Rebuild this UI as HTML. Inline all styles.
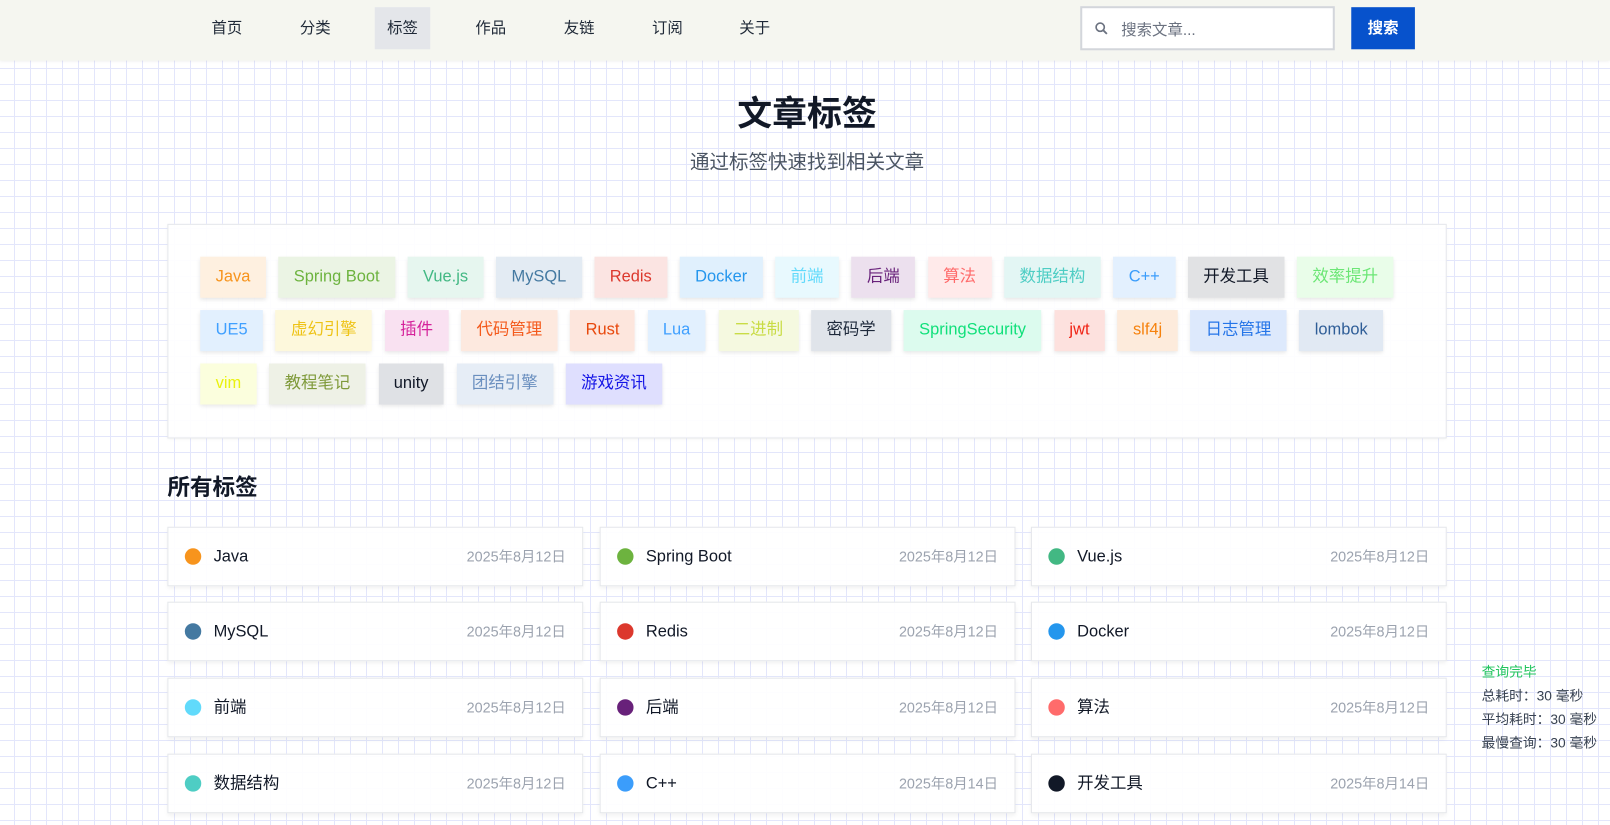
<!DOCTYPE html>
<html><head><meta charset="utf-8"><style>
*{box-sizing:border-box;margin:0;padding:0}
html{width:1610px;height:824px;overflow:hidden;background-color:#fff;background-image:linear-gradient(#e3e6fb 1px,transparent 1px),linear-gradient(90deg,#e3e6fb 1px,transparent 1px);background-size:16px 16px;background-position:14px 4px}
body{width:1568px;height:803px;overflow:visible;font-family:"Liberation Sans","Noto Sans CJK SC",sans-serif;color:#111827;position:relative;transform:scale(1.02679);transform-origin:0 0}
.nav{position:absolute;top:0;left:0;width:1568px;height:59px;background:#f5f6f0;box-shadow:0 1px 3px rgba(0,0,0,.08)}
.nav a{position:absolute;top:7px;height:41px;line-height:41px;padding:0 12px;font-size:15px;color:#1f2937;text-decoration:none}
.nav a.on{background:#e4e6ea}
.search{position:absolute;left:1052px;top:6px;width:248px;height:43px;border:2px solid #d3d6db;background:#fff}
.search span{position:absolute;left:38px;top:10px;font-size:15px;color:#6b7280}
.btn{position:absolute;left:1316px;top:7px;width:62px;height:41px;background:#0752cc;color:#fff;font-size:15px;font-weight:bold;text-align:center;line-height:41px}
h1{position:absolute;top:83px;left:0;width:1572px;text-align:center;font-size:34px;font-weight:bold;color:#111827}
.sub{position:absolute;top:143px;left:0;width:1572px;text-align:center;font-size:19px;color:#4b5563}
.cloud{position:absolute;left:163px;top:218px;width:1246px;height:209px;background:rgba(255,255,255,.9);border:1px solid #e5e7eb;box-shadow:0 1px 3px rgba(0,0,0,.05);padding:31px 31px}
.tags{display:flex;flex-wrap:wrap;gap:12px 12.3px}
.t{height:40px;line-height:40px;padding:0 15px;font-size:16px;box-shadow:0 2px 4px rgba(0,0,0,.1)}
h2{position:absolute;left:163px;top:457px;font-size:22px;font-weight:bold}
.card{position:absolute;width:405px;height:58px;background:rgba(255,255,255,.92);border:1px solid #e5e7eb;box-shadow:0 2px 4px rgba(0,0,0,.06);display:flex;align-items:center;padding:0 16px}
.card i{width:16px;height:16px;border-radius:50%;flex:none;margin-right:12px}
.card b{font-size:16px;font-weight:normal;color:#111827;line-height:20px;flex:1;padding-top:2px}
.card em{font-size:14px;font-style:normal;color:#9ca3af;line-height:20px}
.stats{position:absolute;left:1443px;top:643px;font-size:13.4px;line-height:23px;color:#374151}
</style></head><body>
<div class="nav">
<a style="left:194px">首页</a><a style="left:280px">分类</a><a class="on" style="left:365px">标签</a><a style="left:451px">作品</a><a style="left:537px">友链</a><a style="left:623px">订阅</a><a style="left:708px">关于</a>
<div class="search"><svg style="position:absolute;left:12px;top:13px" width="14" height="14" viewBox="0 0 14 14"><circle cx="5.5" cy="5.5" r="4" fill="none" stroke="#6b7280" stroke-width="1.6"/><path d="M8.5 8.5L12 12" stroke="#6b7280" stroke-width="1.8"/></svg><span>搜索文章...</span></div>
<div class="btn">搜索</div>
</div>
<h1>文章标签</h1>
<div class="sub">通过标签快速找到相关文章</div>
<div class="cloud"><div class="tags">
<span class="t" style="background:#fef0e0;color:#f7941d">Java</span>
<span class="t" style="background:#ebf4e4;color:#6db33f">Spring Boot</span>
<span class="t" style="background:#e6f6ef;color:#42b883">Vue.js</span>
<span class="t" style="background:#e3ebf3;color:#4479a1">MySQL</span>
<span class="t" style="background:#fbe4e2;color:#dc382d">Redis</span>
<span class="t" style="background:#e0f0fd;color:#2496ed">Docker</span>
<span class="t" style="background:#e8f9fe;color:#61dafb">前端</span>
<span class="t" style="background:#ece0ee;color:#68217a">后端</span>
<span class="t" style="background:#ffeaea;color:#ff6b6b">算法</span>
<span class="t" style="background:#e3f6f4;color:#4ecdc4">数据结构</span>
<span class="t" style="background:#e3f0fe;color:#3b9dfb">C++</span>
<span class="t" style="background:#e1e2e4;color:#111827">开发工具</span>
<span class="t" style="background:#e9fde9;color:#6be675">效率提升</span>
<span class="t" style="background:#e2f0fe;color:#40a0ff">UE5</span>
<span class="t" style="background:#fdf8dc;color:#eec316">虚幻引擎</span>
<span class="t" style="background:#f9e1f1;color:#d5239b">插件</span>
<span class="t" style="background:#fde9df;color:#f45a1c">代码管理</span>
<span class="t" style="background:#fde6dd;color:#e8480c">Rust</span>
<span class="t" style="background:#e2f0fe;color:#40a0ff">Lua</span>
<span class="t" style="background:#f5f9e0;color:#c9dc46">二进制</span>
<span class="t" style="background:#e0e4ea;color:#1e293b">密码学</span>
<span class="t" style="background:#dcfbee;color:#10e07a">SpringSecurity</span>
<span class="t" style="background:#fde1de;color:#f02416">jwt</span>
<span class="t" style="background:#fdebdc;color:#f6820e">slf4j</span>
<span class="t" style="background:#dde9fc;color:#2575e8">日志管理</span>
<span class="t" style="background:#e1e9f3;color:#2e5d97">lombok</span>
<span class="t" style="background:#fbfedd;color:#eaf20f">vim</span>
<span class="t" style="background:#eef1e6;color:#7f9a3a">教程笔记</span>
<span class="t" style="background:#dfe1e5;color:#111827">unity</span>
<span class="t" style="background:#e6edf6;color:#6a8fbf">团结引擎</span>
<span class="t" style="background:#dfdffe;color:#1515e6">游戏资讯</span>
</div></div>
<h2>所有标签</h2>
<div class="card" style="left:163px;top:513px"><i style="background:#f7941d"></i><b>Java</b><em>2025年8月12日</em></div>
<div class="card" style="left:584px;top:513px"><i style="background:#6db33f"></i><b>Spring Boot</b><em>2025年8月12日</em></div>
<div class="card" style="left:1004px;top:513px"><i style="background:#42b883"></i><b>Vue.js</b><em>2025年8月12日</em></div>
<div class="card" style="left:163px;top:586px"><i style="background:#4479a1"></i><b>MySQL</b><em>2025年8月12日</em></div>
<div class="card" style="left:584px;top:586px"><i style="background:#dc382d"></i><b>Redis</b><em>2025年8月12日</em></div>
<div class="card" style="left:1004px;top:586px"><i style="background:#2496ed"></i><b>Docker</b><em>2025年8月12日</em></div>
<div class="card" style="left:163px;top:660px"><i style="background:#61dafb"></i><b>前端</b><em>2025年8月12日</em></div>
<div class="card" style="left:584px;top:660px"><i style="background:#68217a"></i><b>后端</b><em>2025年8月12日</em></div>
<div class="card" style="left:1004px;top:660px"><i style="background:#ff6b6b"></i><b>算法</b><em>2025年8月12日</em></div>
<div class="card" style="left:163px;top:734px"><i style="background:#4ecdc4"></i><b>数据结构</b><em>2025年8月12日</em></div>
<div class="card" style="left:584px;top:734px"><i style="background:#3b9dfb"></i><b>C++</b><em>2025年8月14日</em></div>
<div class="card" style="left:1004px;top:734px"><i style="background:#111827"></i><b>开发工具</b><em>2025年8月14日</em></div>
<div class="stats"><div style="color:#22c55e">查询完毕</div><div>总耗时：30 毫秒</div><div>平均耗时：30 毫秒</div><div>最慢查询：30 毫秒</div></div>
</body></html>
